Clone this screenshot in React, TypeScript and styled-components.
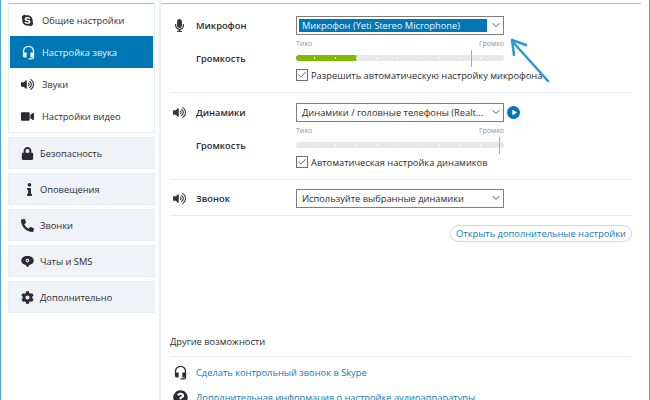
import React from 'react';
import styled, { createGlobalStyle } from 'styled-components';
import { FaSkype, FaVolumeUp, FaVideo, FaLock, FaInfo, FaPhone, FaCog, FaMicrophone, FaQuestionCircle, FaPlay } from 'react-icons/fa';
import { MdHeadsetMic } from 'react-icons/md';
import { FiChevronDown, FiCheck } from 'react-icons/fi';

const GlobalStyle = createGlobalStyle`
  html, body {
    margin: 0;
    padding: 0;
    height: 400px;
    overflow: hidden;
    background: #fff;
    font-family: "Open Sans", "Liberation Sans", sans-serif;
    font-size: 9.3px;
    color: #2d2a33;
  }
`;

const Window = styled.div`
  display: flex;
  height: 400px;
  box-sizing: border-box;
  border-left: 1px solid #45a5ea;
  border-right: 1px solid #45a5ea;
  overflow: hidden;
  position: relative;
`;

const Sidebar = styled.nav`
  width: 147px;
  margin-left: 7px;
  flex-shrink: 0;
  display: flex;
  flex-direction: column;
  gap: 4px;
`;

const ActiveGroup = styled.div`
  box-sizing: border-box;
  height: 130px;
  border: 1px solid #e6edf5;
  border-top: 1px solid #a9bed2;
  margin-top: 3px;
  padding: 0 1px;
`;

const SubItem = styled.div<{ $active?: boolean }>`
  display: flex;
  align-items: center;
  height: 32px;
  padding-left: 11px;
  background: ${({ $active }) => ($active ? '#0077b5' : '#fff')};
  color: ${({ $active }) => ($active ? '#e8f3fa' : '#2d2a33')};
`;

const IconSlot = styled.span<{ $width: number }>`
  width: ${({ $width }) => $width}px;
  flex-shrink: 0;
  display: flex;
  align-items: center;
  font-size: 13px;
`;

const SectionItem = styled.div`
  display: flex;
  align-items: center;
  box-sizing: border-box;
  height: 32px;
  padding-left: 12px;
  background: #eff3f8;
  border: 1px solid #e6edf5;
`;

const InfoGlyph = styled(FaInfo)`
  margin-left: 2px;
`;

const PhoneGlyph = styled(FaPhone)`
  transform: scaleX(-1);
`;

const Main = styled.main`
  flex: 1;
  margin: 0 8px 0 4px;
  border-left: 2px solid #e8f0f8;
  padding-top: 3px;
  min-width: 0;
`;

const TopRule = styled.div`
  height: 1px;
  background: #a9bed2;
`;

const Content = styled.div`
  padding: 0 9px;
`;

const Section = styled.section<{ $height: number; $top: number }>`
  box-sizing: border-box;
  height: ${({ $height }) => $height}px;
  padding-top: ${({ $top }) => $top}px;
  border-bottom: 1px solid #e6eef6;
`;

const FormRow = styled.div`
  display: grid;
  grid-template-columns: 26px 100px 1fr;
  align-items: center;
  height: 20px;
`;

const RowIcon = styled.span`
  display: flex;
  align-items: center;
  padding-left: 3px;
  font-size: 13px;
  color: #38353e;
`;

const Label = styled.span`
  font-weight: 600;
  color: #2d2a33;
`;

const ControlLine = styled.div`
  display: flex;
  align-items: center;
  gap: 3px;
`;

const Select = styled.div`
  box-sizing: border-box;
  width: 208px;
  height: 19px;
  display: flex;
  align-items: center;
  border: 1px solid #7d7d84;
  padding: 2px 0 2px 2px;
  background: #fff;
`;

const SelectValue = styled.span<{ $selected?: boolean }>`
  box-sizing: border-box;
  width: 188px;
  height: 100%;
  display: flex;
  align-items: center;
  padding-left: 3px;
  white-space: nowrap;
  overflow: hidden;
  background: ${({ $selected }) => ($selected ? '#0077b5' : 'transparent')};
  color: ${({ $selected }) => ($selected ? '#eaf4fb' : '#2d2a33')};
`;

const Caret = styled(FiChevronDown)`
  margin-left: 3px;
  font-size: 12px;
  color: #55525a;
`;

const PlayButton = styled.span`
  width: 13px;
  height: 13px;
  border-radius: 50%;
  background: #0077b5;
  color: #fff;
  display: flex;
  align-items: center;
  justify-content: center;
  font-size: 5px;
  padding-left: 1px;
  box-sizing: border-box;
`;

const ScaleLabels = styled.div`
  width: 208px;
  margin: 4px 0 0 126px;
  display: flex;
  justify-content: space-between;
  font-size: 7px;
  line-height: 9px;
  color: #8d9299;
`;

const Track = styled.div`
  position: relative;
  width: 208px;
  height: 6px;
  border-radius: 3px;
  background: #e8e8e8;
`;

const Fill = styled.div<{ $level: number }>`
  width: ${({ $level }) => $level}px;
  height: 100%;
  border-radius: 3px;
  background: #7fba00;
`;

const Tick = styled.span<{ $left: number }>`
  position: absolute;
  left: ${({ $left }) => $left}px;
  top: 2px;
  width: 1px;
  height: 2px;
  background: #fff;
`;

const Marker = styled.span<{ $left: number }>`
  position: absolute;
  left: ${({ $left }) => $left}px;
  top: -5px;
  width: 1px;
  height: 17px;
  background: #a3adb8;
`;

const CheckRow = styled.label`
  display: flex;
  align-items: center;
  gap: 3px;
  margin-left: 126px;
  height: 14px;
`;

const CheckBox = styled.span`
  box-sizing: border-box;
  width: 12px;
  height: 12px;
  border: 1px solid #6c6a72;
  display: flex;
  align-items: center;
  justify-content: center;
  font-size: 10px;
  color: #3a3840;
`;

const ButtonRow = styled.div`
  display: flex;
  justify-content: flex-end;
  padding-top: 9px;
  height: 118px;
  box-sizing: border-box;
`;

const PillButton = styled.button`
  box-sizing: border-box;
  height: 17px;
  width: 182px;
  padding: 0;
  border: 1px solid #c5d9e8;
  border-radius: 9px;
  background: #fff;
  color: #0f78b8;
  font: inherit;
  white-space: nowrap;
`;

const OtherTitle = styled.div`
  height: 23px;
  box-sizing: border-box;
  line-height: 15px;
  border-bottom: 1px solid #e6eef6;
`;

const LinkList = styled.div`
  padding-top: 3px;
`;

const LinkRow = styled.div`
  display: flex;
  align-items: center;
  height: 25px;
  color: #0f78b8;
  white-space: nowrap;
`;

const LinkIcon = styled.span`
  width: 26px;
  padding-left: 3px;
  box-sizing: border-box;
  display: flex;
  align-items: center;
  font-size: 15px;
  color: #2d2a33;
`;

const ArrowOverlay = styled.svg`
  position: absolute;
  left: 0;
  top: 0;
  pointer-events: none;
`;

const ChatIcon = () => (
  <svg width="13" height="13" viewBox="0 0 13 13">
    <path d="M6.5 1C2.8 1 .2 2.9.2 5.6c0 2.3 1.9 4 4.5 4.4l1.8 2.4 1.8-2.4c2.6-.4 4.5-2.1 4.5-4.4C12.8 2.9 10.2 1 6.5 1z" fill="#2d2a33" />
    <circle cx="6.5" cy="5.6" r="1.8" fill="#fff" />
    <circle cx="6.5" cy="5.6" r=".8" fill="#2d2a33" />
  </svg>
);

const ticks = [18, 39, 60, 81, 101, 122, 143, 163, 184];

const Scale = ({ level, marker }: { level: number; marker: number }) => (
  <Track>
    <Fill $level={level} />
    {ticks.map((left) => (
      <Tick key={left} $left={left} />
    ))}
    <Marker $left={marker} />
  </Track>
);

const VolumeBlock = ({ level, marker, checkLabel }: { level: number; marker: number; checkLabel: string }) => (
  <>
    <ScaleLabels>
      <span>Тихо</span>
      <span>Громко</span>
    </ScaleLabels>
    <FormRow>
      <span />
      <Label>Громкость</Label>
      <Scale level={level} marker={marker} />
    </FormRow>
    <CheckRow>
      <CheckBox>
        <FiCheck />
      </CheckBox>
      {checkLabel}
    </CheckRow>
  </>
);

export default function App() {
  return (
    <Window>
      <GlobalStyle />
      <Sidebar>
        <ActiveGroup>
          <SubItem>
            <IconSlot $width={21}><FaSkype /></IconSlot>
            Общие настройки
          </SubItem>
          <SubItem $active>
            <IconSlot $width={21}><MdHeadsetMic size={15} /></IconSlot>
            Настройка звука
          </SubItem>
          <SubItem>
            <IconSlot $width={21}><FaVolumeUp /></IconSlot>
            Звуки
          </SubItem>
          <SubItem>
            <IconSlot $width={21}><FaVideo /></IconSlot>
            Настройки видео
          </SubItem>
        </ActiveGroup>
        <SectionItem>
          <IconSlot $width={19}><FaLock /></IconSlot>
          Безопасность
        </SectionItem>
        <SectionItem>
          <IconSlot $width={19}><InfoGlyph /></IconSlot>
          Оповещения
        </SectionItem>
        <SectionItem>
          <IconSlot $width={19}><PhoneGlyph /></IconSlot>
          Звонки
        </SectionItem>
        <SectionItem>
          <IconSlot $width={19}><ChatIcon /></IconSlot>
          Чаты и SMS
        </SectionItem>
        <SectionItem>
          <IconSlot $width={19}><FaCog /></IconSlot>
          Дополнительно
        </SectionItem>
      </Sidebar>
      <Main>
        <TopRule />
        <Content>
          <Section $height={89} $top={11}>
            <FormRow>
              <RowIcon><FaMicrophone /></RowIcon>
              <Label>Микрофон</Label>
              <Select>
                <SelectValue $selected>Микрофон (Yeti Stereo Microphone)</SelectValue>
                <Caret />
              </Select>
            </FormRow>
            <VolumeBlock level={61} marker={175} checkLabel="Разрешить автоматическую настройку микрофона" />
          </Section>
          <Section $height={87} $top={9}>
            <FormRow>
              <RowIcon><FaVolumeUp /></RowIcon>
              <Label>Динамики</Label>
              <ControlLine>
                <Select>
                  <SelectValue>Динамики / головные телефоны (Realt...</SelectValue>
                  <Caret />
                </Select>
                <PlayButton><FaPlay /></PlayButton>
              </ControlLine>
            </FormRow>
            <VolumeBlock level={0} marker={203} checkLabel="Автоматическая настройка динамиков" />
          </Section>
          <Section $height={36} $top={8}>
            <FormRow>
              <RowIcon><FaVolumeUp /></RowIcon>
              <Label>Звонок</Label>
              <Select>
                <SelectValue>Используйте выбранные динамики</SelectValue>
                <Caret />
              </Select>
            </FormRow>
          </Section>
          <ButtonRow>
            <PillButton>Открыть дополнительные настройки</PillButton>
          </ButtonRow>
          <OtherTitle>Другие возможности</OtherTitle>
          <LinkList>
            <LinkRow>
              <LinkIcon><MdHeadsetMic /></LinkIcon>
              Сделать контрольный звонок в Skype
            </LinkRow>
            <LinkRow>
              <LinkIcon><FaQuestionCircle /></LinkIcon>
              Дополнительная информация о настройке аудиоаппаратуры
            </LinkRow>
          </LinkList>
        </Content>
      </Main>
      <ArrowOverlay width="650" height="400">
        <path d="M547 81 L511 41 M525 45 L511 40 L513 55" fill="none" stroke="#2a9ad4" strokeWidth="2.5" strokeLinecap="round" strokeLinejoin="round" />
      </ArrowOverlay>
    </Window>
  );
}
